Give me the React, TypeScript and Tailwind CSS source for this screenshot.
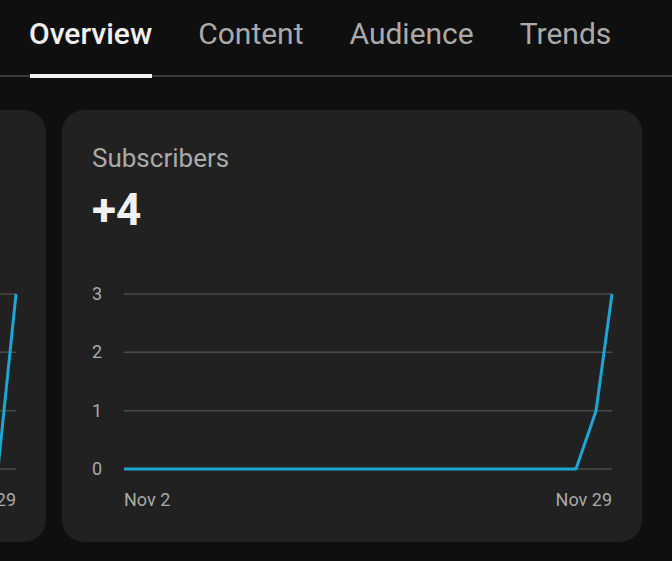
const tabs = ["Overview", "Content", "Audience", "Trends"];

type Pt = [number, number];

function LineChart({ points }: { points: Pt[] }) {
  // grid rows at value 3,2,1,0
  const rows = [10, 68.33, 126.67, 185];
  const w = 488;
  const h = 195;
  const d = points.map((p, i) => `${i ? "L" : "M"}${p[0]} ${p[1]}`).join(" ");
  return (
    <div className="flex flex-col">
      <div className="flex">
        <div className="flex h-[195px] w-[32px] flex-col justify-between text-[18px] leading-[20px] text-[#aaaaaa]">
          <span>3</span>
          <span>2</span>
          <span>1</span>
          <span>0</span>
        </div>
        <svg width={w} height={h} viewBox={`0 0 ${w} ${h}`} className="block overflow-visible">
          {rows.map((y) => (
            <line key={y} x1={0} x2={w} y1={y} y2={y} stroke="#4a4a4a" strokeWidth={1.5} />
          ))}
          <path d={d} fill="none" stroke="#1ea5d3" strokeWidth={3} strokeLinejoin="round" />
        </svg>
      </div>
      <div className="ml-[32px] mt-[11px] flex justify-between text-[18px] leading-[20px] text-[#aaaaaa]">
        <span>Nov 2</span>
        <span>Nov 29</span>
      </div>
    </div>
  );
}

function StatCard({ title, value, points, className = "" }: { title: string; value: string; points: Pt[]; className?: string }) {
  return (
    <div className={`h-[432px] w-[580px] shrink-0 rounded-[22px] bg-[#212121] px-[30px] pt-[32px] ${className}`}>
      <div className="text-[26px] leading-[32px] text-[#aaaaaa]">{title}</div>
      <div className="mt-[10px] text-[44px] font-bold leading-[52px] text-[#f1f1f1]">{value}</div>
      <div className="mt-[48px]">
        <LineChart points={points} />
      </div>
    </div>
  );
}

export default function App() {
  return (
    <div className="h-[561px] w-[672px] overflow-hidden bg-[#0f0f0f] font-['Roboto',sans-serif]">
      <nav className="flex h-[77px] gap-[46px] border-b-2 border-[#3a3a3a] pl-[30px]">
        {tabs.map((t, i) => (
          <div
            key={t}
            className={`relative pt-[16px] text-[30px] leading-[36px] ${i === 0 ? "-ml-[1px] font-medium text-[#f1f1f1]" : "text-[#aaaaaa]"}`}
          >
            {t}
            {i === 0 && <span className="absolute bottom-[-3px] left-[1px] right-0 h-[4px] bg-[#f1f1f1]" />}
          </div>
        ))}
      </nav>
      <div className="mt-[33px] flex gap-[16px]">
        <StatCard
          className="ml-[-534px]"
          title="Views"
          value="12"
          points={[
            [0, 185],
            [470, 185],
            [488, 10],
          ]}
        />
        <StatCard
          title="Subscribers"
          value="+4"
          points={[
            [0, 185],
            [452, 185],
            [472, 127],
            [488, 10],
          ]}
        />
      </div>
    </div>
  );
}
